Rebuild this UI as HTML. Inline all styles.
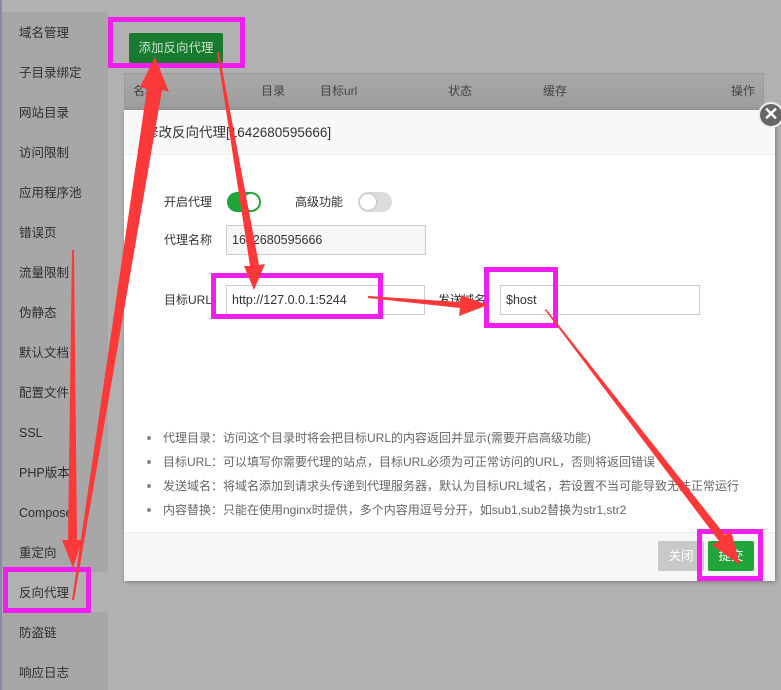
<!DOCTYPE html>
<html><head><meta charset="utf-8"><style>
*{margin:0;padding:0;box-sizing:border-box}
body{width:781px;height:690px;overflow:hidden;background:#b1b1b1;font-family:"Liberation Sans","Noto Sans CJK SC",sans-serif;position:relative;color:#333}
.abs{position:absolute}
.side{left:2px;top:12px;width:106px;height:678px;background:#a7a7a7}
.si{position:absolute;left:19px;font-size:12.5px;line-height:16px;color:#2e2e2e}
.mag{position:absolute;border:5px solid #f01ff0}
.note{position:absolute;left:163px;font-size:12px;line-height:16px;color:#666}
.note:before{content:"";position:absolute;left:-16px;top:6px;width:4px;height:4px;border-radius:50%;background:#888}
.lbl{position:absolute;font-size:12px;line-height:16px;color:#333}
.inp{position:absolute;height:30px;border:1px solid #ccc;background:#fff;font-size:12.5px;line-height:16px;padding:6px 0 0 5px;color:#333}
</style></head><body>
<div class="abs" style="left:0;top:0;width:2px;height:690px;background:#8a8aa8"></div>
<div class="abs side"></div>
<div class="abs" style="left:2px;top:572px;width:106px;height:40px;background:#b1b1b1"></div>
<div class="si" style="top:25px">域名管理</div>
<div class="si" style="top:65px">子目录绑定</div>
<div class="si" style="top:105px">网站目录</div>
<div class="si" style="top:145px">访问限制</div>
<div class="si" style="top:185px">应用程序池</div>
<div class="si" style="top:225px">错误页</div>
<div class="si" style="top:265px">流量限制</div>
<div class="si" style="top:305px">伪静态</div>
<div class="si" style="top:345px">默认文档</div>
<div class="si" style="top:385px">配置文件</div>
<div class="si" style="top:425px">SSL</div>
<div class="si" style="top:465px">PHP版本</div>
<div class="si" style="top:505px">Composer</div>
<div class="si" style="top:545px">重定向</div>
<div class="si" style="top:585px">反向代理</div>
<div class="si" style="top:625px">防盗链</div>
<div class="si" style="top:665px">响应日志</div>

<div class="abs" style="left:129px;top:33px;width:94px;height:30px;background:#187a2f;border-radius:2px;color:#c6e3cc;font-size:12.5px;text-align:center;line-height:30px">添加反向代理</div>
<div class="abs" style="left:124px;top:73px;width:640px;height:37px;background:linear-gradient(#a9a9a9,#9c9c9c);border:1px solid #999"></div>
<div class="lbl" style="left:133px;top:83px;color:#444">名称</div>
<div class="lbl" style="left:261px;top:83px;color:#444">目录</div>
<div class="lbl" style="left:320px;top:83px;color:#444">目标url</div>
<div class="lbl" style="left:448px;top:83px;color:#444">状态</div>
<div class="lbl" style="left:543px;top:83px;color:#444">缓存</div>
<div class="lbl" style="left:731px;top:83px;color:#444">操作</div>

<div class="abs" style="left:124px;top:110px;width:651px;height:471px;background:#fff;box-shadow:1px 1px 4px rgba(0,0,0,.3)"></div>
<div class="abs" style="left:124px;top:110px;width:651px;height:45px;background:#f8f8f8;border-bottom:1px solid #eee"></div>
<div class="abs" style="left:145px;top:124px;font-size:13.5px;line-height:18px;color:#333">修改反向代理[1642680595666]</div>
<div class="abs" style="left:758px;top:102px;width:26px;height:26px;border-radius:50%;background:#666;border:2px solid #eee;color:#fff;font-size:18px;line-height:21px;text-align:center;font-weight:bold">✕</div>

<div class="lbl" style="left:164px;top:194px">开启代理</div>
<div class="abs" style="left:227px;top:192px;width:34px;height:20px;border-radius:10px;background:#20a53a"></div>
<div class="abs" style="left:243px;top:194px;width:16px;height:16px;border-radius:50%;background:#fff"></div>
<div class="lbl" style="left:295px;top:194px">高级功能</div>
<div class="abs" style="left:358px;top:192px;width:34px;height:20px;border-radius:10px;background:#ddd"></div>
<div class="abs" style="left:360px;top:194px;width:16px;height:16px;border-radius:50%;background:#fff;box-shadow:0 0 2px #999"></div>
<div class="lbl" style="left:164px;top:232px">代理名称</div>
<div class="inp" style="left:226px;top:225px;width:200px;background:#f6f6f6">1642680595666</div>
<div class="lbl" style="left:164px;top:292px">目标URL</div>
<div class="inp" style="left:226px;top:285px;width:199px">http://127.0.0.1:5244</div>
<div class="lbl" style="left:438px;top:292px">发送域名</div>
<div class="inp" style="left:500px;top:285px;width:200px">$host</div>

<div class="note" style="top:430px">代理目录：访问这个目录时将会把目标URL的内容返回并显示(需要开启高级功能)</div>
<div class="note" style="top:454px">目标URL：可以填写你需要代理的站点，目标URL必须为可正常访问的URL，否则将返回错误</div>
<div class="note" style="top:478px">发送域名：将域名添加到请求头传递到代理服务器，默认为目标URL域名，若设置不当可能导致无法正常运行</div>
<div class="note" style="top:502px">内容替换：只能在使用nginx时提供，多个内容用逗号分开，如sub1,sub2替换为str1,str2</div>

<div class="abs" style="left:124px;top:532px;width:651px;height:49px;background:#f5f6f6;border-top:1px solid #eee"></div>
<div class="abs" style="left:658px;top:541px;width:46px;height:30px;background:#c9c9c9;border-radius:2px;color:#fff;font-size:12.5px;text-align:center;line-height:30px">关闭</div>
<div class="abs" style="left:708px;top:541px;width:46px;height:30px;background:#20a53a;border-radius:2px;color:#fff;font-size:12.5px;text-align:center;line-height:30px">提交</div>

<div class="mag" style="left:108px;top:17px;width:137px;height:51px"></div>
<div class="mag" style="left:211px;top:273px;width:172px;height:46px"></div>
<div class="mag" style="left:484px;top:267px;width:74px;height:61px"></div>
<div class="mag" style="left:3px;top:567px;width:88px;height:46px"></div>
<div class="mag" style="left:697px;top:529px;width:66px;height:52px"></div>

<svg class="abs" style="left:0;top:0" width="781" height="690">
<g fill="#fc3838">
<polygon points="72,250 74,250 77,540 82,540 73,568 62,540 68,540"/>
<polygon points="72,600 74,600 162,90 169,92 155,57 140,87 147,89"/>
<polygon points="217,52 219,52 259,265 265,264 254,290 244,266 250,266"/>
<polygon points="368,296 368,298 460,308 459,316 488,305 461,295 460,302"/>
<polygon points="545,310 546,309 725,535 731,531 740,565 712,545 719,541"/>
</g>
</svg>
</body></html>
